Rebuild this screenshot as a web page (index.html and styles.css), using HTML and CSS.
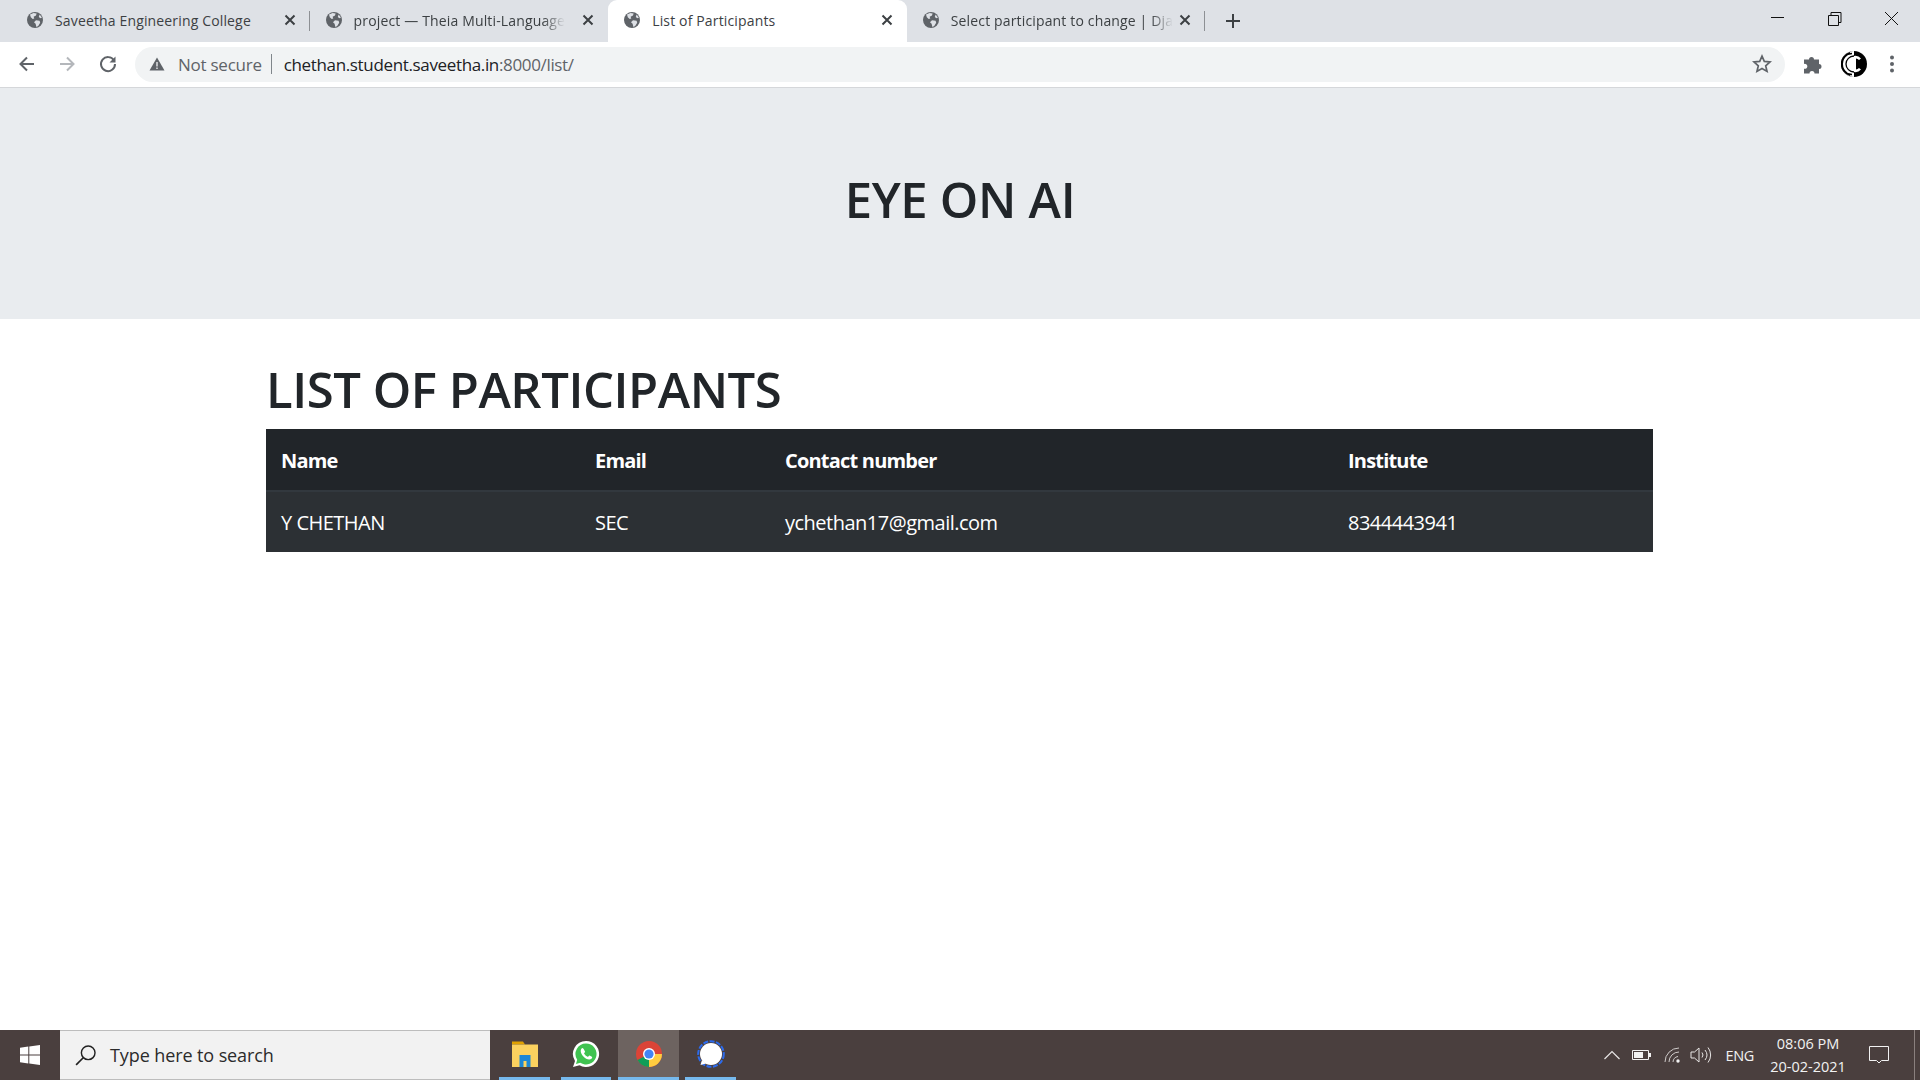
FILE: index.html
```html
<!DOCTYPE html>
<html lang="en">

<head>
    <meta charset="utf-8">
    <title>List of Participants</title>
    <link rel="stylesheet" href="styles.css">
</head>

<body>
    <svg class="icon-defs" xmlns="http://www.w3.org/2000/svg">
        <symbol id="globe" viewBox="0 0 16 16">
            <circle cx="8" cy="8" r="8" fill="#5f6368" />
            <path fill="#dee1e6" d="M3 2.6 6.6 1l3 .6-.6 2-2.4 1.2.7 1.6-1.6.6L3.8 5.2zM9 8.2l3.6.6.6 2-2 3.2-1.8 1-.8-3.2-1.6-1.6zM12.6 2.6l2.4 3-1.6.6-1.6-1.2z" />
        </symbol>
        <symbol id="close" viewBox="0 0 16 16">
            <path d="M3.5 3.5l9 9M12.500 3.500l-9 9" stroke="#3c4043" stroke-width="2" fill="none" />
        </symbol>
    </svg>

    <div class="tab-strip">
        <div class="tab">
            <svg class="favicon"><use href="#globe" /></svg>
            <span class="tab-title">Saveetha Engineering College</span>
            <svg class="tab-close"><use href="#close" /></svg>
        </div>
        <div class="tab">
            <svg class="favicon"><use href="#globe" /></svg>
            <span class="tab-title tab-fade">project — Theia Multi-Language</span>
            <svg class="tab-close"><use href="#close" /></svg>
        </div>
        <div class="tab tab-active">
            <svg class="favicon"><use href="#globe" /></svg>
            <span class="tab-title">List of Participants</span>
            <svg class="tab-close"><use href="#close" /></svg>
        </div>
        <div class="tab tab-sep">
            <svg class="favicon"><use href="#globe" /></svg>
            <span class="tab-title tab-fade">Select participant to change | Dja</span>
            <svg class="tab-close"><use href="#close" /></svg>
        </div>
        <svg class="new-tab" viewBox="0 0 16 16"><path d="M8 1v14M1 8h14" stroke="#3c4043" stroke-width="2" /></svg>
        <div class="window-controls">
            <svg class="win-btn" viewBox="0 0 57 34"><path d="M22 17.500h13" stroke="#111" /></svg>
            <svg class="win-btn" viewBox="0 0 57 34"><path d="M22.500 15.500h10v10h-10zM25 15v-2.500h10v10h-2.500" stroke="#111" fill="none" /></svg>
            <svg class="win-btn" viewBox="0 0 57 34"><path d="M22 12l13 13M35 12L22 25" stroke="#111" fill="none" /></svg>
        </div>
    </div>

    <div class="toolbar">
        <svg class="nav-btn" viewBox="0 0 20 20"><path d="M17 10H4M10 3.500 3.500 10l6.500 6.500" stroke="#5f6368" stroke-width="2" fill="none" /></svg>
        <svg class="nav-btn nav-forward" viewBox="0 0 20 20"><path d="M3 10h13M10 3.500l6.500 6.500-6.500 6.500" stroke="#b4b7bb" stroke-width="2" fill="none" /></svg>
        <svg class="nav-btn nav-reload" viewBox="0 0 20 20"><path d="M16 6.500A7 7 0 1 0 17 10" stroke="#5f6368" stroke-width="2" fill="none" /><path d="M17.500 2.500v6h-6z" fill="#5f6368" /></svg>
        <div class="omnibox">
            <svg class="warn-icon" viewBox="0 0 16 16"><path d="M8 1.500 15.500 14.500H.5z" fill="#5f6368" /><path d="M8 6v4.500M8 11.500v1.500" stroke="#f1f3f4" stroke-width="1.300" /></svg>
            <span class="not-secure">Not secure</span>
            <span class="omni-sep"></span>
            <span class="url">chethan.student.saveetha.in<span class="url-rest">:8000/list/</span></span>
            <svg class="star" viewBox="0 0 20 20"><path d="M10 2.200l2.300 5.200 5.700.6-4.300 3.800 1.300 5.600L10 14.500l-5 2.900 1.300-5.600L2 8l5.700-.6z" fill="none" stroke="#5f6368" stroke-width="1.700" /></svg>
        </div>
        <svg class="puzzle" viewBox="0 0 20 20"><path fill="#5f6368" d="M1 5.500h5a2.500 2.500 0 1 1 5 0h5v4.500a2.500 2.500 0 1 1 0 5v4.500h-4.500a2.500 2.500 0 1 0-5 0H1v-4.800a2.500 2.500 0 1 0 0-4.700z" /></svg>
        <svg class="avatar" viewBox="0 0 26 26">
            <circle cx="13" cy="13" r="13" fill="#000" />
            <path d="M13 0a13 13 0 0 0 0 26z" fill="#fff" />
            <path d="M11 2.500a10.500 10.500 0 0 0 0 21M13 5a8 8 0 0 0 0 16M9 1.500a12 12 0 0 0 0 23M6 4a11 11 0 0 0 0 18" fill="none" stroke="#000" stroke-width="1.300" />
            <path d="M20 7.500a7.500 7.500 0 0 0-7-2.500v16a7.500 7.500 0 0 0 7-2.500l-2-1.500a5 5 0 0 1-3 1.500V7.500a5 5 0 0 1 3 1.500z" fill="#fff" />
        </svg>
        <svg class="menu-dots" viewBox="0 0 6 20"><circle cx="3" cy="3.500" r="2" fill="#5f6368" /><circle cx="3" cy="10" r="2" fill="#5f6368" /><circle cx="3" cy="16.500" r="2" fill="#5f6368" /></svg>
    </div>

    <main class="page">
        <header class="jumbotron">
            <h1 class="site-title">EYE ON AI</h1>
        </header>
        <section class="container">
            <h2 class="list-title">LIST OF PARTICIPANTS</h2>
            <table class="participants">
                <thead>
                    <tr>
                        <th class="col-name">Name</th>
                        <th class="col-email">Email</th>
                        <th class="col-contact">Contact number</th>
                        <th>Institute</th>
                    </tr>
                </thead>
                <tbody>
                    <tr>
                        <td>Y CHETHAN</td>
                        <td>SEC</td>
                        <td>ychethan17@gmail.com</td>
                        <td>8344443941</td>
                    </tr>
                </tbody>
            </table>
        </section>
    </main>

    <footer class="taskbar">
        <div class="start-btn">
            <svg class="win-logo" viewBox="0 0 20 20"><path fill="#fff" d="M0 2.800 8.300 1.600v8H0zM9.300 1.500 20 0v9.600H9.300zM0 10.600h8.300v7.900L0 17.300zM9.300 10.600H20V20L9.300 18.600z" /></svg>
        </div>
        <div class="task-search">
            <svg class="search-glass" viewBox="0 0 20 20"><circle cx="12" cy="8" r="6.200" fill="none" stroke="#222" stroke-width="1.300" /><path d="M7.500 12.500 1 19" stroke="#222" stroke-width="1.500" /></svg>
            <span>Type here to search</span>
        </div>
        <div class="task-apps">
            <div class="task-app">
                <svg class="app-icon" viewBox="0 0 28 28">
                    <path d="M1 1.500h11l2 3H1z" fill="#e0a100" />
                    <path d="M1 4.500h26V27H1z" fill="#fbd25f" />
                    <path d="M8.500 15h11v12h-4v-6h-3v6h-4z" fill="#1c87d6" />
                </svg>
            </div>
            <div class="task-app task-whatsapp">
                <svg class="app-icon" viewBox="0 0 28 28">
                    <path d="M14 1a13 13 0 0 0-11 20L1 27l6.500-1.800A13 13 0 1 0 14 1z" fill="#fff" />
                    <path d="M14 3.500a10.500 10.500 0 0 0-8.800 16.200L4 24l4.300-1.200A10.500 10.500 0 1 0 14 3.500z" fill="#40c351" />
                    <path d="M10.500 8c-.6 0-1.800 1-1.800 3 0 3.500 4.500 8.500 8.500 8.500 2 0 3-1.300 3-2.300 0-.5-2.300-1.700-2.800-1.700-.5 0-1 1.300-1.500 1.300-1 0-3.800-2.500-3.800-3.500 0-.5 1-1 1-1.500S11.300 8 10.500 8z" fill="#fff" />
                </svg>
            </div>
            <div class="task-app task-active">
                <svg class="app-icon" viewBox="0 0 28 28">
                    <circle cx="14" cy="14" r="13" fill="#db4437" />
                    <path d="M14 14h13A13 13 0 0 1 14 27z" fill="#ffcd40" />
                    <path d="M14 14 2.500 20A13 13 0 0 0 14 27z" fill="#0f9d58" />
                    <circle cx="14" cy="14" r="6" fill="#fff" />
                    <circle cx="14" cy="14" r="4.600" fill="#4285f4" />
                </svg>
            </div>
            <div class="task-app">
                <svg class="app-icon" viewBox="0 0 28 28">
                    <circle cx="14" cy="14" r="12.800" fill="none" stroke="#2c6bed" stroke-width="2" stroke-dasharray="5 1.500" />
                    <circle cx="14" cy="14" r="11" fill="#fff" />
                    <path d="M5 20l-1.500 5 5.500-1.500z" fill="#fff" />
                </svg>
            </div>
        </div>
        <div class="tray">
            <svg class="tray-chevron" viewBox="0 0 16 10"><path d="M.5 9 8 1.500 15.500 9" fill="none" stroke="#e8e6e5" stroke-width="1.200" /></svg>
            <svg class="tray-battery" viewBox="0 0 20 12"><path d="M.5 1.500h16v9H.5z" fill="none" stroke="#f2f2f2" /><path d="M2 3h9v6H2z" fill="#f2f2f2" /><path d="M17 4h2v4h-2z" fill="#f2f2f2" /></svg>
            <svg class="tray-wifi" viewBox="0 0 18 16"><path d="M1 15A14 14 0 0 1 15 1M5 15A10 10 0 0 1 15 5M9 15a6 6 0 0 1 5-5.500" fill="none" stroke="#cfcbca" /><circle cx="14" cy="14" r="1.700" fill="#f2f2f2" /></svg>
            <svg class="tray-volume" viewBox="0 0 22 18"><path d="M1 6h3.500L9 2v14l-4.500-4H1z" fill="none" stroke="#e8e6e5" /><path d="M12 6.500a4 4 0 0 1 0 5M15 4a8 8 0 0 1 0 10M18 1.500a12 12 0 0 1 0 15" fill="none" stroke="#e8e6e5" /></svg>
            <span class="tray-lang">ENG</span>
            <div class="tray-clock">
                <span>08:06 PM</span>
                <span>20-02-2021</span>
            </div>
            <svg class="tray-notify" viewBox="0 0 20 18"><path d="M.5.5h19v14h-7l-2.500 2.500L7.500 14.500h-7z" fill="none" stroke="#f2f2f2" /></svg>
            <span class="show-desktop"></span>
        </div>
    </footer>
</body>

</html>
```

FILE: styles.css
```css
* {
    box-sizing: border-box;
}

body {
    margin: 0;
    height: 1080px;
    display: flex;
    flex-direction: column;
    overflow: hidden;
    font-family: "Open Sans", "Noto Sans", Arial, sans-serif;
    background-color: #fff;
    color: #212529;
}

.icon-defs {
    display: none;
}

/* browser tabs */
.tab-strip {
    display: flex;
    align-items: flex-start;
    height: 42px;
    padding-left: 11px;
    background-color: #dee1e6;
}

.tab {
    display: flex;
    align-items: center;
    position: relative;
    width: 298.6px;
    height: 42px;
    padding: 0 12px 2px 16px;
    font-size: 14px;
    letter-spacing: 0.15px;
    color: #3c4043;
}

.tab:first-child::after,
.tab-sep::after {
    content: "";
    position: absolute;
    right: 0;
    top: 11px;
    height: 20px;
    width: 1px;
    background-color: #8d9094;
}

.tab-active {
    background-color: #fff;
    border-radius: 9px 9px 0 0;
}

.favicon {
    width: 16px;
    height: 16px;
    flex: none;
    margin-right: 12px;
}

.tab-title {
    white-space: nowrap;
}

.tab-fade {
    -webkit-mask-image: linear-gradient(to left, transparent 0, #000 22px);
    mask-image: linear-gradient(to left, transparent 0, #000 22px);
}

.tab-close {
    width: 16px;
    height: 16px;
    flex: none;
    margin-left: auto;
}

.new-tab {
    width: 16px;
    height: 16px;
    margin: 13px 0 0 20px;
}

.window-controls {
    display: flex;
    margin-left: auto;
}

.win-btn {
    width: 57px;
    height: 34px;
}

/* address bar */
.toolbar {
    display: flex;
    align-items: center;
    height: 46px;
    padding: 0 0 1px 17px;
    background-color: #fff;
    border-bottom: 1px solid #d5d7da;
}

.nav-btn {
    width: 20px;
    height: 20px;
    margin-right: 20px;
}

.nav-forward {
    margin-right: 21px;
}

.nav-reload {
    margin-right: 17px;
}

.omnibox {
    display: flex;
    align-items: center;
    width: 1650px;
    height: 35px;
    padding: 0 13px 0 14px;
    border-radius: 18px;
    background-color: #f1f3f4;
    font-size: 17px;
}

.warn-icon {
    width: 16px;
    height: 16px;
    margin-right: 13px;
}

.not-secure {
    color: #5f6368;
    letter-spacing: -0.25px;
}

.omni-sep {
    width: 1px;
    height: 20px;
    margin: 0 12px 0 9px;
    background-color: #80868b;
}

.url {
    color: #202124;
    letter-spacing: -0.35px;
}

.url-rest {
    color: #5f6368;
}

.star {
    width: 20px;
    height: 20px;
    margin-left: auto;
}

.puzzle {
    width: 20px;
    height: 20px;
    margin-left: 18px;
}

.avatar {
    width: 26px;
    height: 26px;
    margin-left: 18px;
}

.menu-dots {
    width: 6px;
    height: 20px;
    margin-left: 22px;
}

/* page */
.page {
    flex: 1;
}

.jumbotron {
    display: flex;
    justify-content: center;
    align-items: center;
    height: 231px;
    padding-bottom: 8px;
    background-color: #e9ecef;
}

.site-title {
    margin: 0;
    font-size: 49px;
    font-weight: 600;
    letter-spacing: -0.3px;
    line-height: 1.2;
}

.container {
    width: 1387px;
    margin-left: 266px;
    padding-top: 41px;
}

.list-title {
    margin: 0 0 10px;
    font-size: 49px;
    font-weight: 600;
    letter-spacing: -0.45px;
    line-height: 59px;
}

.participants {
    width: 100%;
    border-collapse: collapse;
    table-layout: fixed;
    font-size: 20px;
    color: #fff;
}

.participants th,
.participants td {
    height: 62px;
    padding: 0 15px;
    text-align: left;
    letter-spacing: -0.5px;
}

.participants th {
    padding-top: 2px;
    background-color: #212529;
    font-weight: 700;
    letter-spacing: -0.8px;
}

.participants td {
    height: 61px;
    background-color: #2c3034;
    border-top: 2px solid #32383e;
}

.col-name {
    width: 314px;
}

.col-email {
    width: 190px;
}

.col-contact {
    width: 563px;
}

/* windows taskbar */
.taskbar {
    display: flex;
    height: 50px;
    background-color: #4a3f3e;
}

.start-btn {
    display: flex;
    justify-content: center;
    align-items: center;
    width: 60px;
}

.win-logo {
    width: 20px;
    height: 20px;
}

.task-search {
    display: flex;
    align-items: center;
    width: 430px;
    padding-left: 15px;
    background-color: #f2f2f2;
    border-top: 1px solid #bdbdbd;
    border-bottom: 1px solid #bdbdbd;
    font-size: 18px;
    letter-spacing: -0.1px;
    color: #2b2b2b;
}

.search-glass {
    width: 22px;
    height: 22px;
    margin-right: 13px;
}

.task-apps {
    display: flex;
    gap: 6px;
    padding-left: 9px;
}

.task-app {
    display: flex;
    justify-content: center;
    align-items: center;
    width: 51px;
    border-bottom: 3px solid #76b9ed;
}

.task-whatsapp {
    width: 50px;
    margin-left: 5px;
}

.task-active {
    width: 61px;
    margin-left: 1px;
    background-color: #6d6360;
}

.app-icon {
    width: 28px;
    height: 28px;
}

.tray {
    display: flex;
    align-items: center;
    margin-left: auto;
    color: #f2f2f2;
}

.tray-chevron {
    width: 16px;
    height: 10px;
    margin-right: 12px;
}

.tray-battery {
    width: 20px;
    height: 12px;
    margin-right: 12px;
}

.tray-wifi {
    width: 18px;
    height: 16px;
    margin-right: 8px;
}

.tray-volume {
    width: 22px;
    height: 18px;
    margin-right: 13px;
}

.tray-lang {
    font-size: 14.5px;
    letter-spacing: -0.3px;
}

.tray-clock {
    display: flex;
    flex-direction: column;
    align-items: center;
    gap: 4px;
    width: 90px;
    margin-left: 9px;
    font-size: 14.5px;
    line-height: 19px;
}

.tray-notify {
    width: 20px;
    height: 18px;
    margin-left: 16px;
}

.show-desktop {
    width: 1px;
    height: 50px;
    margin-left: 25px;
    margin-right: 5px;
    background-color: #8a807e;
}
```
